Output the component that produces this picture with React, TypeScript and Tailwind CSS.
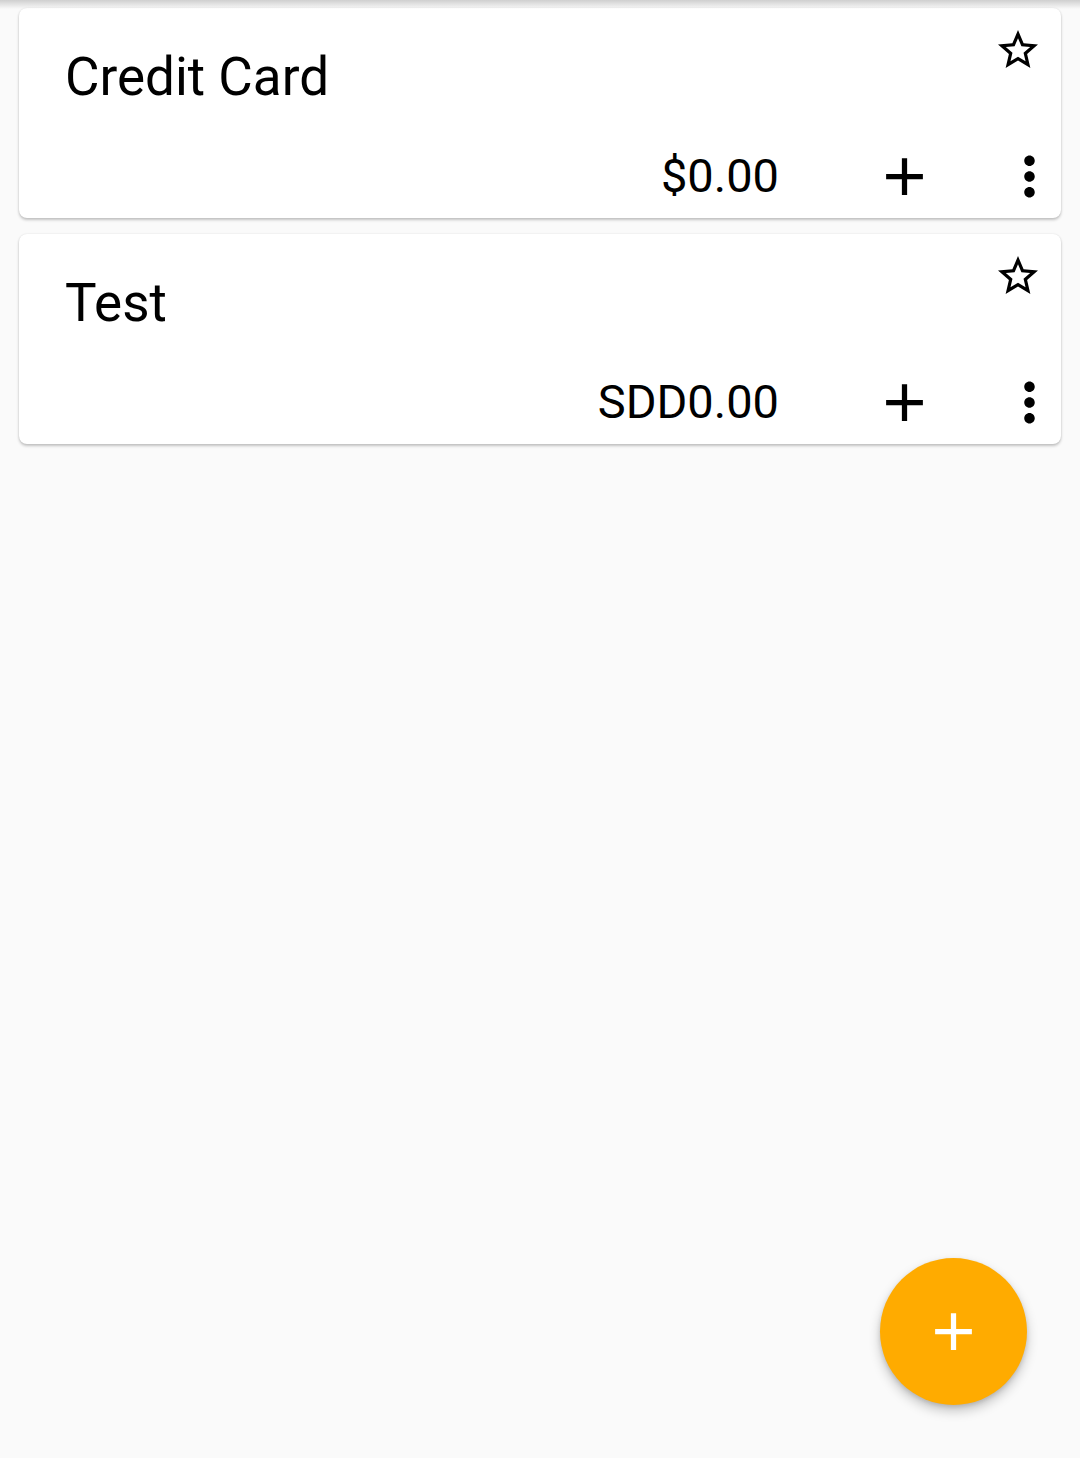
import React from "react";

type Account = {
  name: string;
  balance: string;
};

const accounts: Account[] = [
  { name: "Credit Card", balance: "$0.00" },
  { name: "Test", balance: "SDD0.00" },
];

function StarBorder() {
  return (
    <svg width="48" height="48" viewBox="0 0 24 24" fill="#000">
      <path d="M22 9.24l-7.19-.62L12 2 9.19 8.63 2 9.24l5.46 4.73L5.82 21 12 17.27 18.18 21l-1.63-7.03L22 9.24zM12 15.4l-3.76 2.27 1-4.28-3.32-2.88 4.38-.38L12 6.1l1.71 4.04 4.38.38-3.32 2.88 1 4.28L12 15.4z" />
    </svg>
  );
}

function AddIcon({ color = "#000" }: { color?: string }) {
  return (
    <svg width="63" height="63" viewBox="0 0 24 24" fill={color}>
      <path d="M19 13h-6v6h-2v-6H5v-2h6V5h2v6h6v2z" />
    </svg>
  );
}

function MoreVert() {
  return (
    <svg width="63" height="63" viewBox="0 0 24 24" fill="#000">
      <path d="M12 8c1.1 0 2-.9 2-2s-.9-2-2-2-2 .9-2 2 .9 2 2 2zm0 2c-1.1 0-2 .9-2 2s.9 2 2 2 2-.9 2-2-.9-2-2-2zm0 6c-1.1 0-2 .9-2 2s.9 2 2 2 2-.9 2-2-.9-2-2-2z" />
    </svg>
  );
}

function AccountCard({ account }: { account: Account }) {
  return (
    <div className="flex h-[210px] flex-col justify-between rounded-lg bg-white shadow-[0_2px_3px_rgba(0,0,0,0.22),0_0_2px_rgba(0,0,0,0.1)]">
      <div className="flex items-start justify-between">
        <h2 className="pl-[46px] pt-[43px] text-[53px] leading-[53px] text-black">
          {account.name}
        </h2>
        <div className="mr-[19px] mt-[18px]">
          <StarBorder />
        </div>
      </div>

      <div className="mb-[10px] flex h-[63px] items-center justify-end">
        <span className="text-[47px] text-black">{account.balance}</span>
        <div className="ml-[94px]">
          <AddIcon />
        </div>
        <div className="ml-[62px]">
          <MoreVert />
        </div>
      </div>
    </div>
  );
}

export default function App() {
  return (
    <main
      className="relative min-h-[1458px] bg-[#fafafa]"
      style={{ fontFamily: "Roboto, 'Noto Sans', sans-serif" }}
    >
      <div className="pointer-events-none absolute left-0 right-0 top-0 h-[9px] bg-gradient-to-b from-[#cfcfcf] to-[#fafafa]/0" />

      <div className="flex flex-col gap-4 px-[19px] pt-2">
        {accounts.map((account) => (
          <AccountCard key={account.name} account={account} />
        ))}
      </div>

      <button className="absolute bottom-[53px] right-[53px] flex h-[147px] w-[147px] items-center justify-center rounded-full bg-[#ffab00] shadow-[0_6px_12px_rgba(0,0,0,0.22),0_2px_4px_rgba(0,0,0,0.12)]">
        <AddIcon color="#fff" />
      </button>
    </main>
  );
}
